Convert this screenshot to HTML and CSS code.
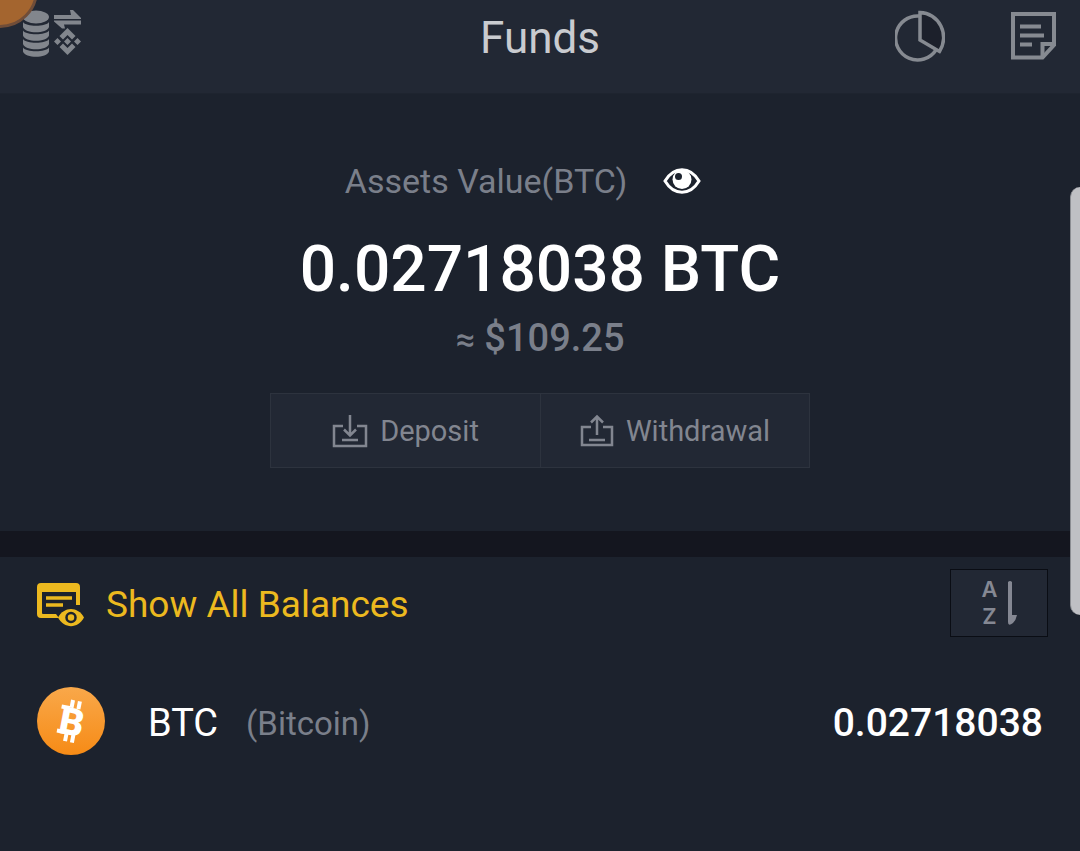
FILE: index.html
```html
<!DOCTYPE html>
<html lang="en">
<head>
    <meta charset="UTF-8">
    <meta name="viewport" content="width=device-width, initial-scale=1.0">
    <title>Funds</title>
    <link rel="stylesheet" href="styles.css">
</head>
<body>
    <header class="topbar">
        <button class="icon-btn" type="button" aria-label="Convert small balances">
            <svg width="58" height="48" viewBox="0 0 58 48" fill="#82868d">
                <ellipse cx="13" cy="7" rx="13" ry="6.5"/>
                <path d="M0 12c3 5 23 5 26 0v5c-2 7-24 7-26 0z"/>
                <path d="M0 20.500c3 5 23 5 26 0v5c-2 7-24 7-26 0z"/>
                <path d="M0 29c3 5 23 5 26 0v5c-2 7-24 7-26 0z"/>
                <path d="M0 37.500c3 5 23 5 26 0v4c-2 7-24 7-26 0z"/>
                <path d="M31 5h17l-1-5h3l8 8v1H31zM58 10.500v4H41l1 4h-3l-8-7v-1z"/>
                <path d="M44.500 18l8 8-3.500 3.500-4.500-4.500-4.500 4.500-3.500-3.500zM44.500 45l8-8-3.500-3.500-4.500 4.500-4.500-4.500-3.500 3.500z"/>
                <path d="M44.500 28l3.500 3.500-3.500 3.500-3.500-3.500zM34.500 28l3.500 3.500-3.500 3.500-3.500-3.500zM54.500 28l3.500 3.500-3.500 3.500-3.500-3.500z"/>
            </svg>
        </button>
        <h1 class="title">Funds</h1>
        <div class="topbar-right">
            <button class="icon-btn" type="button" aria-label="Portfolio">
                <svg width="50" height="52" viewBox="0 0 50 52" fill="none" stroke="#868a91" stroke-width="3.500">
                    <path d="M24 6A22 22 0 1 0 41 40"/>
                    <path d="M25 2.500A24 25 0 0 1 44.500 41.500L25 30z" fill="#1c202b"/>
                </svg>
            </button>
            <button class="icon-btn" type="button" aria-label="History">
                <svg width="46" height="48" viewBox="0 0 46 48" fill="none" stroke="#868a91" stroke-width="4">
                    <path d="M2 2h41v31L31.500 45.500H2z"/>
                    <path d="M43 32H31.500v13"/>
                    <path d="M9 14.500h21M9 23.500h24M9 32.500h12"/>
                </svg>
            </button>
        </div>
    </header>

    <main>
        <section class="assets">
            <div class="assets-label">
                <span>Assets Value(BTC)</span>
                <button class="icon-btn" type="button" aria-label="Hide balance">
                    <svg width="38" height="26" viewBox="0 0 38 26">
                        <path d="M2 13C11-2 27-2 36 13 27 28 11 28 2 13z" fill="none" stroke="#fff" stroke-width="3"/>
                        <circle cx="19" cy="11.500" r="9.500" fill="#fff"/>
                        <circle cx="15.500" cy="8.500" r="3.500" fill="#1c222d"/>
                    </svg>
                </button>
            </div>
            <p class="total">0.02718038 BTC</p>
            <p class="fiat"><span class="approx">≈</span> $109.25</p>
            <div class="actions">
                <button class="action" type="button">
                    <svg width="36" height="34" viewBox="0 0 36 34" fill="none" stroke="#828690" stroke-width="2.500">
                        <path d="M11 12H2v20h32V12h-9M10 26h16"/>
                        <path d="M18 1v20M12 15.500l6 6 6-6"/>
                    </svg>
                    Deposit
                </button>
                <button class="action" type="button">
                    <svg width="34" height="34" viewBox="0 0 34 34" fill="none" stroke="#828690" stroke-width="2.500">
                        <path d="M11 13H2v18h30V13h-9M9 26h16"/>
                        <path d="M17 21V3M11 8.500l6-6 6 6"/>
                    </svg>
                    Withdrawal
                </button>
            </div>
        </section>

        <section class="balances">
            <div class="toolbar">
                <button class="show-all" type="button">
                    <svg width="47" height="44" viewBox="0 0 47 44">
                        <path d="M4 0h35q4 0 4 4v18h-4V9H5v21q0 1 1 1h13l3 4H4q-4 0-4-4V4q0-4 4-4z" fill="#ecb91f"/>
                        <path d="M9 15h26M9 22h17" stroke="#ecb91f" stroke-width="3.500"/>
                        <path d="M21 34.500C27 23 41 23 47 34.500 41 46 27 46 21 34.500z" fill="#ecb91f"/>
                        <circle cx="34" cy="34.500" r="4.500" fill="none" stroke="#1c222d" stroke-width="2.500"/>
                    </svg>
                    Show All Balances
                </button>
                <button class="sort" type="button" aria-label="Sort A to Z">
                    <span class="sort-letters"><span>A</span><span>Z</span></span>
                    <svg width="9" height="46" viewBox="0 0 9 46" fill="#858893">
                        <path d="M0 2q2-2 4 0v33h5q-1 5-4 8-5 4-5-1z"/>
                    </svg>
                </button>
            </div>

            <ul class="coins">
                <li class="coin">
                    <svg width="68" height="68" viewBox="0 0 68 68">
                        <defs>
                            <linearGradient id="orange" x1="0" y1="0" x2="0" y2="1">
                                <stop offset="0" stop-color="#f9a84a"/>
                                <stop offset="1" stop-color="#f68b16"/>
                            </linearGradient>
                        </defs>
                        <circle cx="34" cy="34" r="34" fill="url(#orange)"/>
                        <g transform="rotate(11 34 34)">
                            <path d="M32 13v8M39 13v8M32 47v8M39 47v8M22 21.500h8M22 46h8" stroke="#fff" stroke-width="4"/>
                            <text x="35" y="48" text-anchor="middle" class="coin-mark">B</text>
                        </g>
                    </svg>
                    <span class="symbol">BTC</span>
                    <span class="name">(Bitcoin)</span>
                    <span class="amount">0.02718038</span>
                </li>
            </ul>
        </section>
    </main>

    <div class="corner-bubble"></div>
    <div class="edge-handle"></div>
</body>
</html>
```

FILE: styles.css
```css
* {
    box-sizing: border-box;
}

body {
    position: relative;
    margin: 0;
    min-height: 100vh;
    overflow-x: hidden;
    background-color: #1c222d;
    color: #fff;
    font-family: Roboto, "Liberation Sans", sans-serif;
}

h1, p, ul {
    margin: 0;
    padding: 0;
}

button {
    padding: 0;
    border: none;
    background: none;
    color: inherit;
    font: inherit;
    cursor: pointer;
}

svg {
    display: block;
    flex-shrink: 0;
}

/* top bar */
.topbar {
    display: grid;
    grid-template-columns: 1fr auto 1fr;
    align-items: start;
    padding: 10px 23px 27px;
    background-color: #222834;
    border-bottom: 1px solid #1e242f;
}

.topbar .icon-btn {
    justify-self: start;
}

.title {
    color: #c9cbcf;
    font-size: 44px;
    font-weight: 400;
    line-height: 56px;
}

.topbar-right {
    display: flex;
    justify-content: flex-end;
    align-items: center;
    gap: 66px;
}

/* total value */
.assets {
    display: flex;
    flex-direction: column;
    align-items: center;
    padding: 67px 24px 63px;
    border-bottom: 26px solid #14161f;
}

.assets-label {
    display: flex;
    align-items: center;
    gap: 36px;
    padding-right: 34px;
    color: #7a7f8a;
    font-size: 34px;
    line-height: 40px;
}

.total {
    margin-top: 33px;
    font-size: 64px;
    font-weight: 500;
    line-height: 72px;
}

.fiat {
    margin-top: 10px;
    color: #7a7f8a;
    font-size: 38px;
    font-weight: 500;
    line-height: 44px;
}

.approx {
    font-size: 34px;
}

.actions {
    display: grid;
    grid-template-columns: 1fr 1fr;
    width: 50%;
    min-width: 540px;
    margin-top: 32px;
    border: 1px solid #2d333e;
}

.action {
    display: flex;
    justify-content: center;
    align-items: center;
    gap: 12px;
    height: 73px;
    background-color: #222834;
    color: #828690;
    font-size: 29px;
}

.action + .action {
    border-left: 1px solid #2d333e;
}

/* coin list */
.toolbar {
    display: flex;
    justify-content: space-between;
    align-items: center;
    padding: 12px 32px 0 37px;
}

.show-all {
    display: flex;
    align-items: center;
    gap: 22px;
    padding-top: 3px;
    color: #ecb91f;
    font-size: 37px;
}

.sort {
    display: flex;
    justify-content: center;
    align-items: center;
    gap: 10px;
    width: 98px;
    height: 68px;
    border: 1px solid #0a0d14;
    background-color: #222834;
    color: #858893;
}

.sort-letters {
    display: flex;
    flex-direction: column;
    font-family: Inter, sans-serif;
    font-size: 22px;
    font-weight: 600;
    line-height: 27px;
}

.coins {
    list-style: none;
}

.coin {
    display: flex;
    align-items: center;
    padding: 50px 37px 50px;
}

.coin-mark {
    fill: #fff;
    font-size: 38px;
    font-weight: 900;
}

.symbol,
.name,
.amount {
    padding-top: 4px;
}

.symbol {
    margin-left: 43px;
    font-size: 38px;
}

.name {
    margin-left: 28px;
    color: #7a7f8a;
    font-size: 33px;
}

.amount {
    margin-left: auto;
    font-size: 39px;
    font-weight: 500;
}

/* floating overlays of the phone */
.corner-bubble {
    position: absolute;
    top: -48px;
    left: -38px;
    width: 76px;
    height: 76px;
    border: 3px solid #704d38;
    border-radius: 50%;
    background-color: #a4652f;
}

.edge-handle {
    position: absolute;
    top: 187px;
    right: 0;
    width: 10px;
    height: 428px;
    border-left: 1px solid #8b8d92;
    border-radius: 10px 0 0 10px;
    background-color: #bfc0c4;
}
```
